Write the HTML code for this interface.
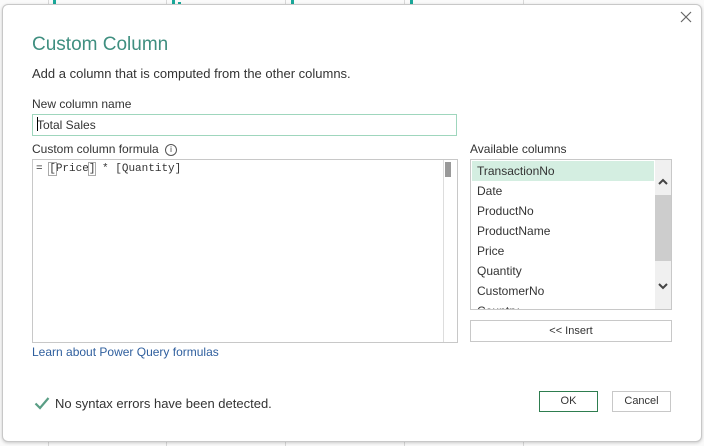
<!DOCTYPE html>
<html><head><style>
body{margin:0;width:704px;height:446px;background:#fff;position:relative;overflow:hidden;font-family:"Liberation Sans",sans-serif;color:#333}
.bg{position:absolute;inset:0;background:#fafafa}
.vl{position:absolute;top:0;height:446px;width:1px;background:#d8d8d8}
.tk{position:absolute;top:0;width:3px;height:4px;background:#1aa89a}
.dlg{position:absolute;left:2px;top:4px;width:698px;height:436px;background:#fff;border:1px solid #c8c8c8;border-radius:6px;box-shadow:0 1px 3px rgba(0,0,0,.2)}
.a{position:absolute;white-space:nowrap}
.mono{font-family:"Liberation Mono",monospace}
.item{position:absolute;left:6px;font-size:12px;color:#333}
</style></head><body>
<div class="bg"></div>
<div class="vl" style="left:48px"></div><div class="vl" style="left:166px"></div><div class="vl" style="left:285px"></div><div class="vl" style="left:404px"></div><div class="vl" style="left:523px"></div>
<div class="tk" style="left:53px"></div><div class="tk" style="left:172px"></div><div class="tk" style="left:178px;top:2px"></div><div class="tk" style="left:291px"></div><div class="tk" style="left:410px"></div>
<div class="dlg"></div>
<svg class="a" style="left:680px;top:11px" width="12" height="12"><path d="M1 1L11 11M11 1L1 11" stroke="#666" stroke-width="1.2"/></svg>
<div class="a" style="left:32px;top:34px;font-size:19px;color:#3f8f80">Custom Column</div>
<div class="a" style="left:32px;top:66px;font-size:13px">Add a column that is computed from the other columns.</div>
<div class="a" style="left:32px;top:97px;font-size:12px">New column name</div>
<div class="a" style="left:32px;top:114px;width:423px;height:20px;border:1px solid #9fd6bd"></div>
<div class="a" style="left:37px;top:118px;font-size:12px">Total Sales</div>
<div class="a" style="left:37px;top:117px;width:1px;height:14px;background:#000"></div>
<div class="a" style="left:32px;top:142px;font-size:12px">Custom column formula</div>
<div class="a" style="left:165px;top:144px;width:10px;height:10px;border:1px solid #555;border-radius:50%;font-size:8px;text-align:center;line-height:10px">i</div>
<div class="a" style="left:32px;top:159px;width:424px;height:182px;border:1px solid #c8c8c8"></div>
<div class="a" style="left:443px;top:160px;width:1px;height:182px;background:#ddd"></div>
<div class="a" style="left:445px;top:162px;width:6px;height:15px;background:#999"></div>
<div class="a mono" style="left:36px;top:163px;font-size:11px">= <span style="outline:1px solid #aaa">[</span>Price<span style="outline:1px solid #aaa">]</span> * [Quantity]</div>
<div class="a" style="left:470px;top:142px;font-size:12px">Available columns</div>
<div class="a" style="left:470px;top:159px;width:200px;height:149px;border:1px solid #c8c8c8;overflow:hidden">
<div style="position:absolute;left:1px;top:1px;width:182px;height:20px;background:#d4eee1"></div>
<div style="position:absolute;left:184px;top:0;width:16px;height:149px;background:#f0f0f0"></div>
<div style="position:absolute;left:184px;top:35px;width:16px;height:66px;background:#cdcdcd"></div>
<svg style="position:absolute;left:186px;top:17px" width="12" height="10"><path d="M2 7L6 3L10 7" stroke="#444" stroke-width="2" fill="none"/></svg>
<svg style="position:absolute;left:186px;top:121px" width="12" height="10"><path d="M2 3L6 7L10 3" stroke="#444" stroke-width="2" fill="none"/></svg>
<div class="item" style="top:4px">TransactionNo</div>
<div class="item" style="top:24px">Date</div>
<div class="item" style="top:44px">ProductNo</div>
<div class="item" style="top:64px">ProductName</div>
<div class="item" style="top:84px">Price</div>
<div class="item" style="top:104px">Quantity</div>
<div class="item" style="top:124px">CustomerNo</div>
<div class="item" style="top:144px">Country</div>
</div>
<div class="a" style="left:470px;top:320px;width:200px;height:20px;border:1px solid #c8c8c8;font-size:11px;text-align:center;line-height:20px">&lt;&lt; Insert</div>
<div class="a" style="left:32px;top:345px;font-size:12px;color:#2f5f9e">Learn about Power Query formulas</div>
<svg class="a" style="left:34px;top:396px" width="16" height="14"><path d="M1.5 7.5L6 12L14.5 2" stroke="#5a9e85" stroke-width="2.2" fill="none"/></svg>
<div class="a" style="left:55px;top:396px;font-size:13px">No syntax errors have been detected.</div>
<div class="a" style="left:539px;top:391px;width:57px;height:19px;border:1px solid #2e7d4f;font-size:11px;text-align:center;line-height:19px">OK</div>
<div class="a" style="left:612px;top:391px;width:57px;height:19px;border:1px solid #c8c8c8;font-size:11px;text-align:center;line-height:19px">Cancel</div>
</body></html>
